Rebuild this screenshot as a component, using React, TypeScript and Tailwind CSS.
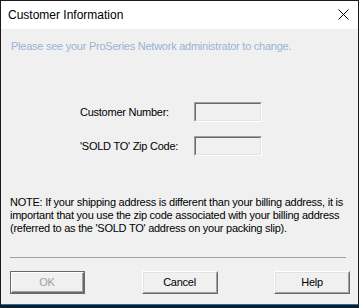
import React from "react";

const sans = { fontFamily: '"Liberation Sans", Arial, sans-serif' } as React.CSSProperties;

function SunkenInput() {
  return (
    <div className="w-[68px] h-[20px] border-t border-l border-t-[#a0a0a0] border-l-[#a0a0a0] border-b border-r border-b-white border-r-white">
      <div className="w-full h-full border-t border-l border-t-[#696969] border-l-[#696969] border-b border-r border-b-[#e3e3e3] border-r-[#e3e3e3] bg-[#f0f0f0]" />
    </div>
  );
}

function Btn({ label, disabled, isDefault }: { label: string; disabled?: boolean; isDefault?: boolean }) {
  if (isDefault) {
    return (
      <div className="w-[75px] h-[23px] border border-[#696969]">
        <div className="w-full h-full border-t border-l border-t-white border-l-white border-b border-r border-b-[#696969] border-r-[#696969]">
          <div className="w-full h-full border-b border-r border-b-[#a0a0a0] border-r-[#a0a0a0] flex items-center justify-center text-[11px] text-[#a0a0a0] bg-[#f0f0f0]">
            {label}
          </div>
        </div>
      </div>
    );
  }
  return (
    <div className="w-[76px] h-[23px] border-t border-l border-t-white border-l-white border-b border-r border-b-[#696969] border-r-[#696969]">
      <div className={"w-full h-full border-t border-l border-t-[#e3e3e3] border-l-[#e3e3e3] border-b border-r border-b-[#a0a0a0] border-r-[#a0a0a0] flex items-center justify-center text-[11px] bg-[#f0f0f0] " + (disabled ? "text-[#a0a0a0]" : "text-black")}>
        {label}
      </div>
    </div>
  );
}

export default function App() {
  return (
    <div className="w-[359px] h-[308px] bg-[#1b1b1b] pt-[1px] px-[1px] pb-[3px] flex flex-col overflow-hidden" style={sans}>
      <div className="h-[28px] bg-white flex items-center justify-between pl-[7px] pr-[9px] shrink-0">
        <span className="text-[12px] text-black leading-none">
          Customer Information
        </span>
        <svg width="11" height="11" viewBox="0 0 11 11" className="mb-[1px]">
          <path d="M0.5 0.5 L10.5 10.5 M10.5 0.5 L0.5 10.5" stroke="#000" strokeWidth="1" fill="none" />
        </svg>
      </div>
      <div className="flex-1 bg-[#f0f0f0] border-b border-b-[#0078d7] flex flex-col text-[11px] leading-[13px] tracking-[-0.25px] text-black">
        <div className="mt-[11px] pl-[10px] text-[#99b4d1]">Please see your ProSeries Network administrator to change.</div>
        <div className="mt-[49px] flex items-center pl-[79px]">
          <span className="w-[114px]">Customer Number:</span>
          <SunkenInput />
        </div>
        <div className="mt-[14px] flex items-center pl-[79px]">
          <span className="w-[114px]">'SOLD TO' Zip Code:</span>
          <SunkenInput />
        </div>
        <div className="mt-[40px] pl-[9px] pr-[6px]">
          NOTE: If your shipping address is different than your billing address, it is important that you use the zip code associated with your billing address (referred to as the 'SOLD TO' address on your packing slip).
        </div>
        <div className="mt-[22px] ml-[9px] mr-[12px] h-[1px] bg-[#a0a0a0]" />
        <div className="mt-[13px] flex justify-between pl-[9px] pr-[8px]">
          <Btn label="OK" isDefault />
          <Btn label="Cancel" />
          <Btn label="Help" />
        </div>
      </div>
    </div>
  );
}
